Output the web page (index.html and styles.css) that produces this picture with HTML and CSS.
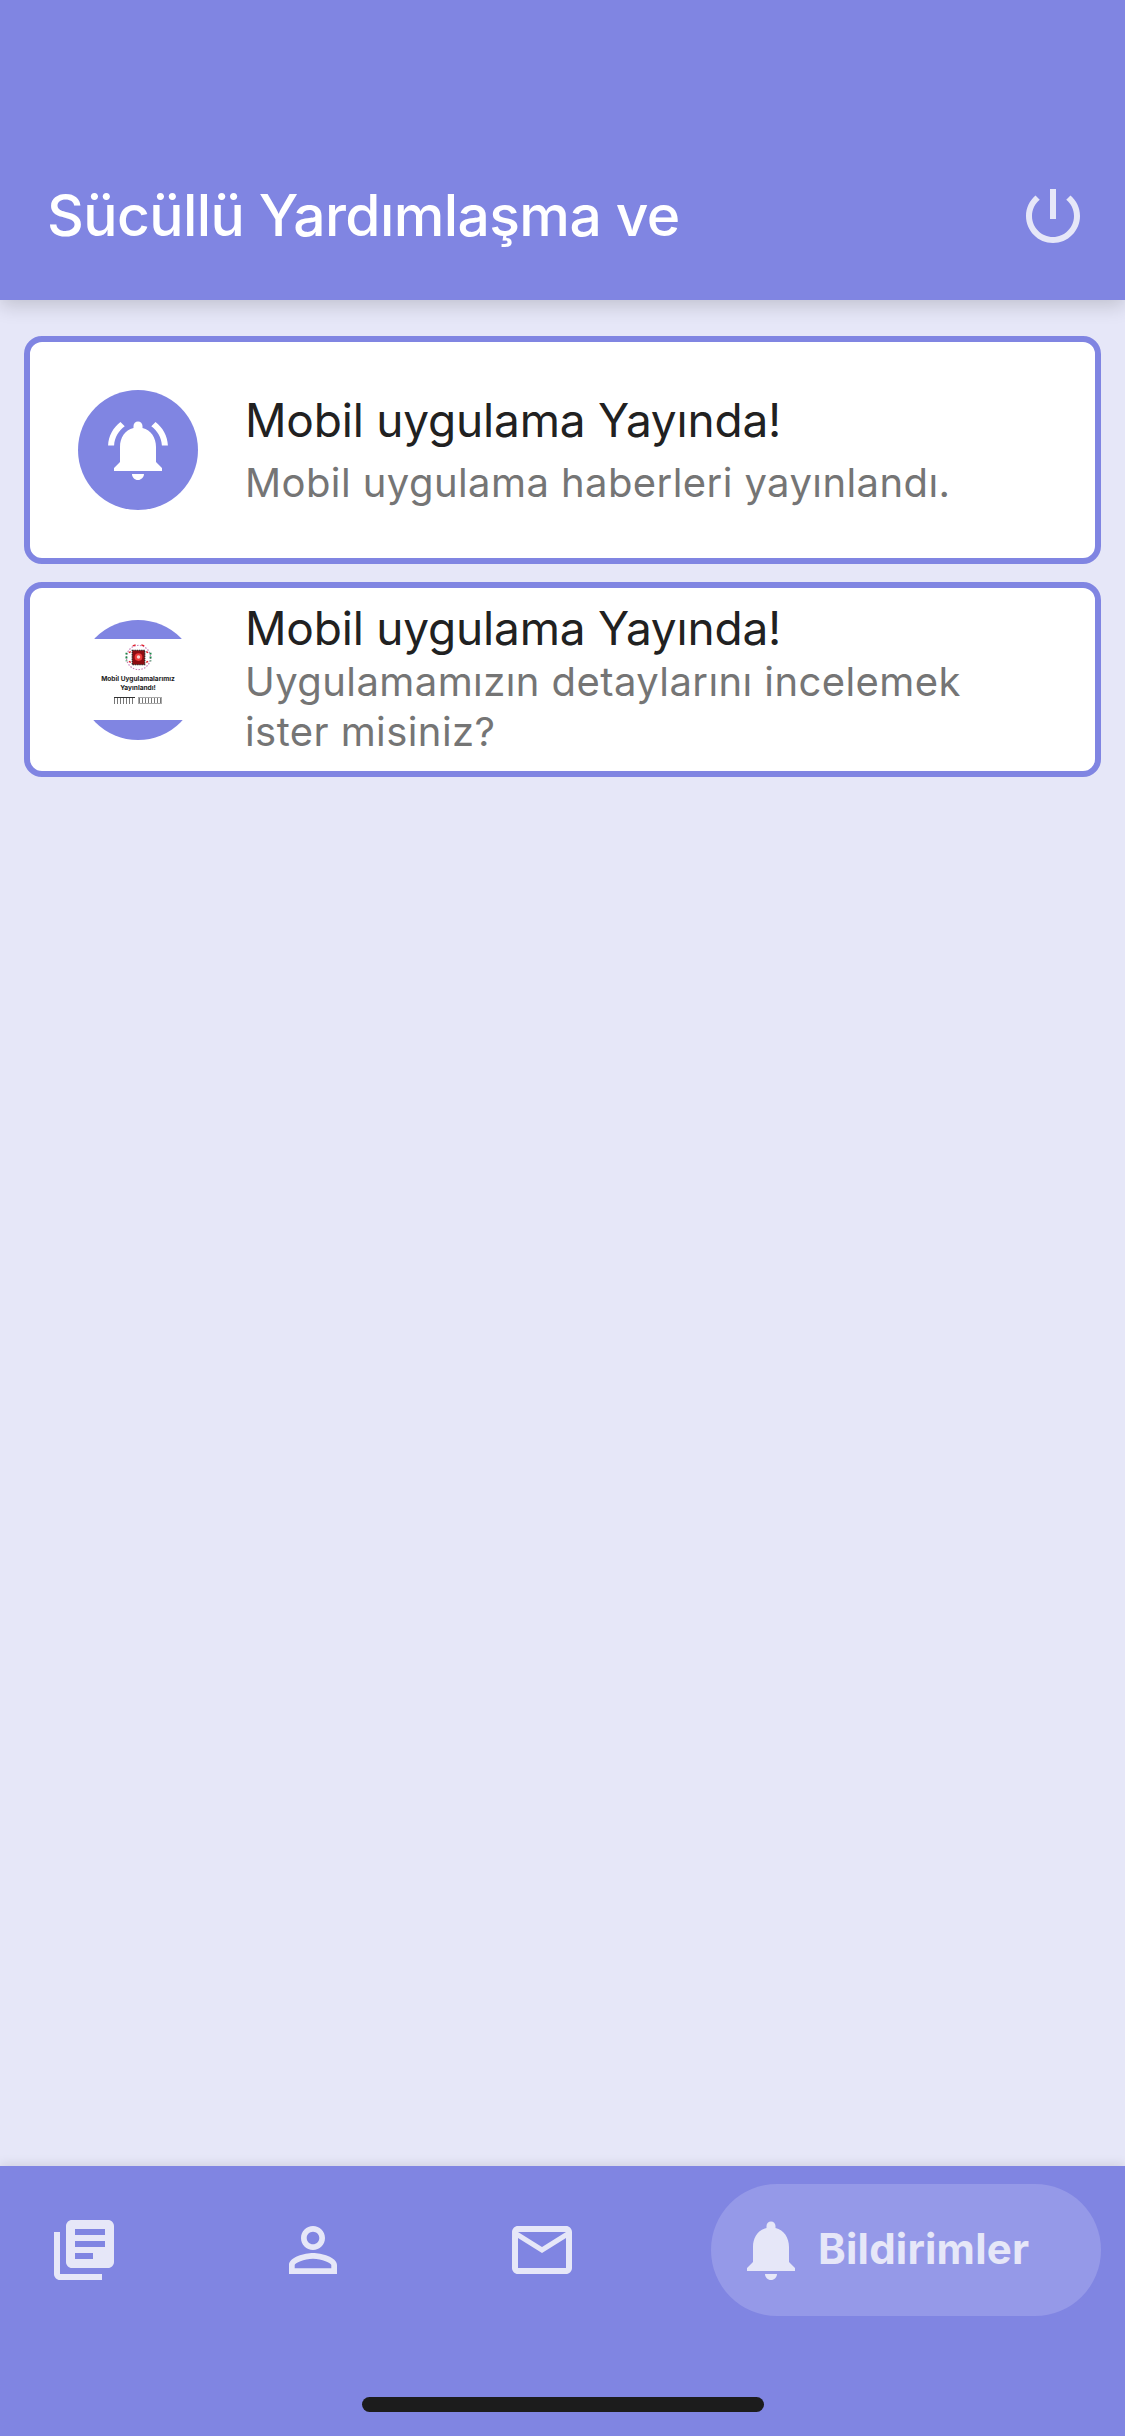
FILE: index.html
```html
<!DOCTYPE html>
<html lang="tr">
<head>
<meta charset="utf-8">
<title>Bildirimler</title>
<link rel="stylesheet" href="styles.css">
</head>
<body>
<div class="app">
  <header class="appbar">
    <h1 class="appbar-title">Sücüllü Yardımlaşma ve</h1>
    <svg class="icon" viewBox="0 0 24 24"><path d="M13 3h-2v10h2V3zm4.83 2.17l-1.42 1.42C17.99 7.86 19 9.81 19 12c0 3.87-3.13 7-7 7s-7-3.13-7-7c0-2.19 1.01-4.14 2.58-5.42L6.17 5.17C4.23 6.82 3 9.26 3 12c0 4.97 4.03 9 9 9s9-4.03 9-9c0-2.74-1.23-5.18-3.17-6.83z"/></svg>
  </header>

  <main class="list">
    <article class="card card-tall">
      <div class="avatar">
        <svg class="icon icon-white" viewBox="0 0 24 24"><path d="M7.58 4.08L6.15 2.65C3.75 4.48 2.17 7.3 2.03 10.5h2c.15-2.65 1.51-4.97 3.55-6.42zm12.39 6.42h2c-.15-3.2-1.73-6.02-4.12-7.85l-1.42 1.43c2.02 1.45 3.39 3.77 3.54 6.42zM18 11c0-3.07-1.64-5.64-4.5-6.32V4c0-.83-.67-1.5-1.5-1.5s-1.5.67-1.5 1.5v.68C7.63 5.36 6 7.92 6 11v5l-2 2v1h16v-1l-2-2v-5zm-6 11c.14 0 .27-.01.4-.04.65-.14 1.18-.58 1.44-1.18.1-.24.15-.5.15-.78h-4c.01 1.1.9 2 2.01 2z"/></svg>
      </div>
      <div class="card-text">
        <h2 class="card-title">Mobil uygulama Yayında!</h2>
        <p class="card-sub">Mobil uygulama haberleri yayınlandı.</p>
      </div>
    </article>

    <article class="card">
      <div class="avatar">
        <div class="poster">
          <svg class="emblem" viewBox="0 0 28 28">
            <circle cx="14" cy="14" r="12.5" fill="none" stroke="#c77fb8" stroke-width="1.2" stroke-dasharray="1.5 1.5"/>
            <path d="M1.5 9v9M26.5 9v9" stroke="#1d8a4a" stroke-width="2" stroke-dasharray="2 2"/>
            <path d="M8 2l3-1M17 1l3 1M4 9l2-1M22 8l2 1M4 18l2 1M22 19l2-1" stroke="#e0202a" stroke-width="1.4"/>
            <rect x="7.5" y="6.5" width="13" height="15" fill="#8d0d12" stroke="#222" stroke-width="1.2" stroke-dasharray="1.5 .8"/>
            <circle cx="14" cy="13.5" r="4" fill="#ee3a3a"/>
            <circle cx="14" cy="13.5" r="1.8" fill="#f7d6d6"/>
          </svg>
          <div class="poster-text">Mobil Uygulamalarımız<br>Yayınlandı!</div>
          <div class="poster-badges">
            <span class="badge"></span>
            <span class="badge badge-play"></span>
          </div>
        </div>
      </div>
      <div class="card-text">
        <h2 class="card-title">Mobil uygulama Yayında!</h2>
        <p class="card-sub">Uygulamamızın detaylarını incelemek ister misiniz?</p>
      </div>
    </article>
  </main>

  <nav class="nav">
    <div class="nav-item">
      <svg class="icon" viewBox="0 0 24 24"><path d="M4 6H2v14c0 1.1.9 2 2 2h14v-2H4V6zm16-4H8c-1.1 0-2 .9-2 2v12c0 1.1.9 2 2 2h12c1.1 0 2-.9 2-2V4c0-1.1-.9-2-2-2zm-1 9H9V9h10v2zm-4 4H9v-2h6v2zm4-8H9V5h10v2z"/></svg>
    </div>
    <div class="nav-item">
      <svg class="icon" viewBox="0 0 24 24"><path d="M12 5.9c1.16 0 2.1.94 2.1 2.1s-.94 2.1-2.1 2.1S9.9 9.16 9.9 8s.94-2.1 2.1-2.1m0 9c2.97 0 6.1 1.46 6.1 2.1v1.1H5.9V17c0-.64 3.13-2.1 6.1-2.1M12 4C9.79 4 8 5.79 8 8s1.79 4 4 4 4-1.79 4-4-1.79-4-4-4zm0 9c-2.67 0-8 1.34-8 4v3h16v-3c0-2.66-5.33-4-8-4z"/></svg>
    </div>
    <div class="nav-item">
      <svg class="icon" viewBox="0 0 24 24"><path d="M20 4H4c-1.1 0-1.99.9-1.99 2L2 18c0 1.1.9 2 2 2h16c1.1 0 2-.9 2-2V6c0-1.1-.9-2-2-2zm0 14H4V8l8 5 8-5v10zm-8-7L4 6h16l-8 5z"/></svg>
    </div>
    <div class="nav-item nav-active">
      <svg class="icon" viewBox="0 0 24 24"><path d="M12 22c1.1 0 2-.9 2-2h-4c0 1.1.89 2 2 2zm6-6v-5c0-3.07-1.64-5.64-4.5-6.32V4c0-.83-.67-1.5-1.5-1.5s-1.5.67-1.5 1.5v.68C7.63 5.36 6 7.92 6 11v5l-2 2v1h16v-1l-2-2z"/></svg>
      <span class="nav-label">Bildirimler</span>
    </div>
    <div class="home-indicator"></div>
  </nav>
</div>
</body>
</html>
```

FILE: styles.css
```css
* { box-sizing: border-box; }

html, body {
  margin: 0;
  padding: 0;
}

body {
  font-family: Inter, "Liberation Sans", sans-serif;
  background: #e6e7f8;
}

.app {
  width: 1125px;
  height: 2436px;
  display: flex;
  flex-direction: column;
  overflow: hidden;
  background: #e6e7f8;
}

.icon {
  width: 72px;
  height: 72px;
  flex: none;
  display: block;
  fill: #e6e7f8;
}

.icon-white { fill: #ffffff; }

.appbar {
  height: 300px;
  flex: none;
  display: flex;
  align-items: flex-end;
  justify-content: space-between;
  padding: 0 36px 48px 47px;
  background: #8085e2;
  box-shadow: 0 6px 18px rgba(0, 0, 0, 0.16);
  position: relative;
  z-index: 1;
}

.appbar-title {
  margin: 0;
  font-size: 57px;
  line-height: 72px;
  font-weight: 500;
  letter-spacing: -0.6px;
  color: #ffffff;
}

.list {
  flex: 1;
  display: flex;
  flex-direction: column;
  gap: 18px;
  padding: 36px 24px 0;
}

.card {
  height: 195px;
  display: flex;
  align-items: center;
  gap: 47px;
  padding: 0 48px;
  background: #ffffff;
  border: 6px solid #8085e2;
  border-radius: 18px;
}

.card-tall { height: 228px; }

.avatar {
  width: 120px;
  height: 120px;
  flex: none;
  display: flex;
  align-items: center;
  justify-content: center;
  border-radius: 50%;
  background: #8085e2;
}

.card-text {
  flex: 1;
  min-width: 0;
  padding-bottom: 3px;
}

.card-tall .card-text { padding-bottom: 1px; }

.card-title {
  margin: 0;
  font-size: 46px;
  line-height: 56px;
  font-weight: 400;
  letter-spacing: -0.2px;
  color: #212121;
}

.card-sub {
  margin: 1px 0 0;
  font-size: 40px;
  line-height: 50px;
  letter-spacing: 0.42px;
  color: #757575;
}

.card-tall .card-sub { margin-top: 10px; }

.poster {
  width: 130px;
  height: 81px;
  flex: none;
  display: flex;
  flex-direction: column;
  align-items: center;
  padding-top: 5px;
  background: #ffffff;
}

.emblem {
  width: 27px;
  height: 27px;
  flex: none;
  display: block;
}

.poster-text {
  margin-top: 4px;
  font-size: 6.6px;
  line-height: 9px;
  font-weight: 700;
  text-align: center;
  white-space: nowrap;
  color: #222222;
}

.poster-badges {
  display: flex;
  gap: 3px;
  margin-top: 4px;
}

.badge {
  width: 21px;
  height: 7px;
  border-top: 1px solid #333333;
  background: repeating-linear-gradient(90deg, #777777 0 1px, #ffffff 1px 3px);
}

.badge-play {
  width: 24px;
  border: 1px solid #aaaaaa;
}

.nav {
  height: 270px;
  flex: none;
  display: flex;
  align-items: flex-start;
  justify-content: space-between;
  padding: 18px 24px 0;
  background: #8085e2;
  box-shadow: 0 -2px 10px rgba(0, 0, 0, 0.1);
  position: relative;
  z-index: 1;
}

.nav-item {
  width: 120px;
  height: 132px;
  display: flex;
  align-items: center;
  justify-content: center;
}

.nav-active {
  width: 390px;
  justify-content: flex-start;
  gap: 11px;
  padding-left: 24px;
  background: #9599e8;
  border-radius: 66px;
}

.nav-label {
  padding-bottom: 3px;
  font-size: 42px;
  font-weight: 700;
  letter-spacing: 0.2px;
  color: #e6e7f8;
}

.home-indicator {
  position: absolute;
  left: 362px;
  top: 231px;
  width: 402px;
  height: 15px;
  border-radius: 8px;
  background: #1c1c1c;
}
```
